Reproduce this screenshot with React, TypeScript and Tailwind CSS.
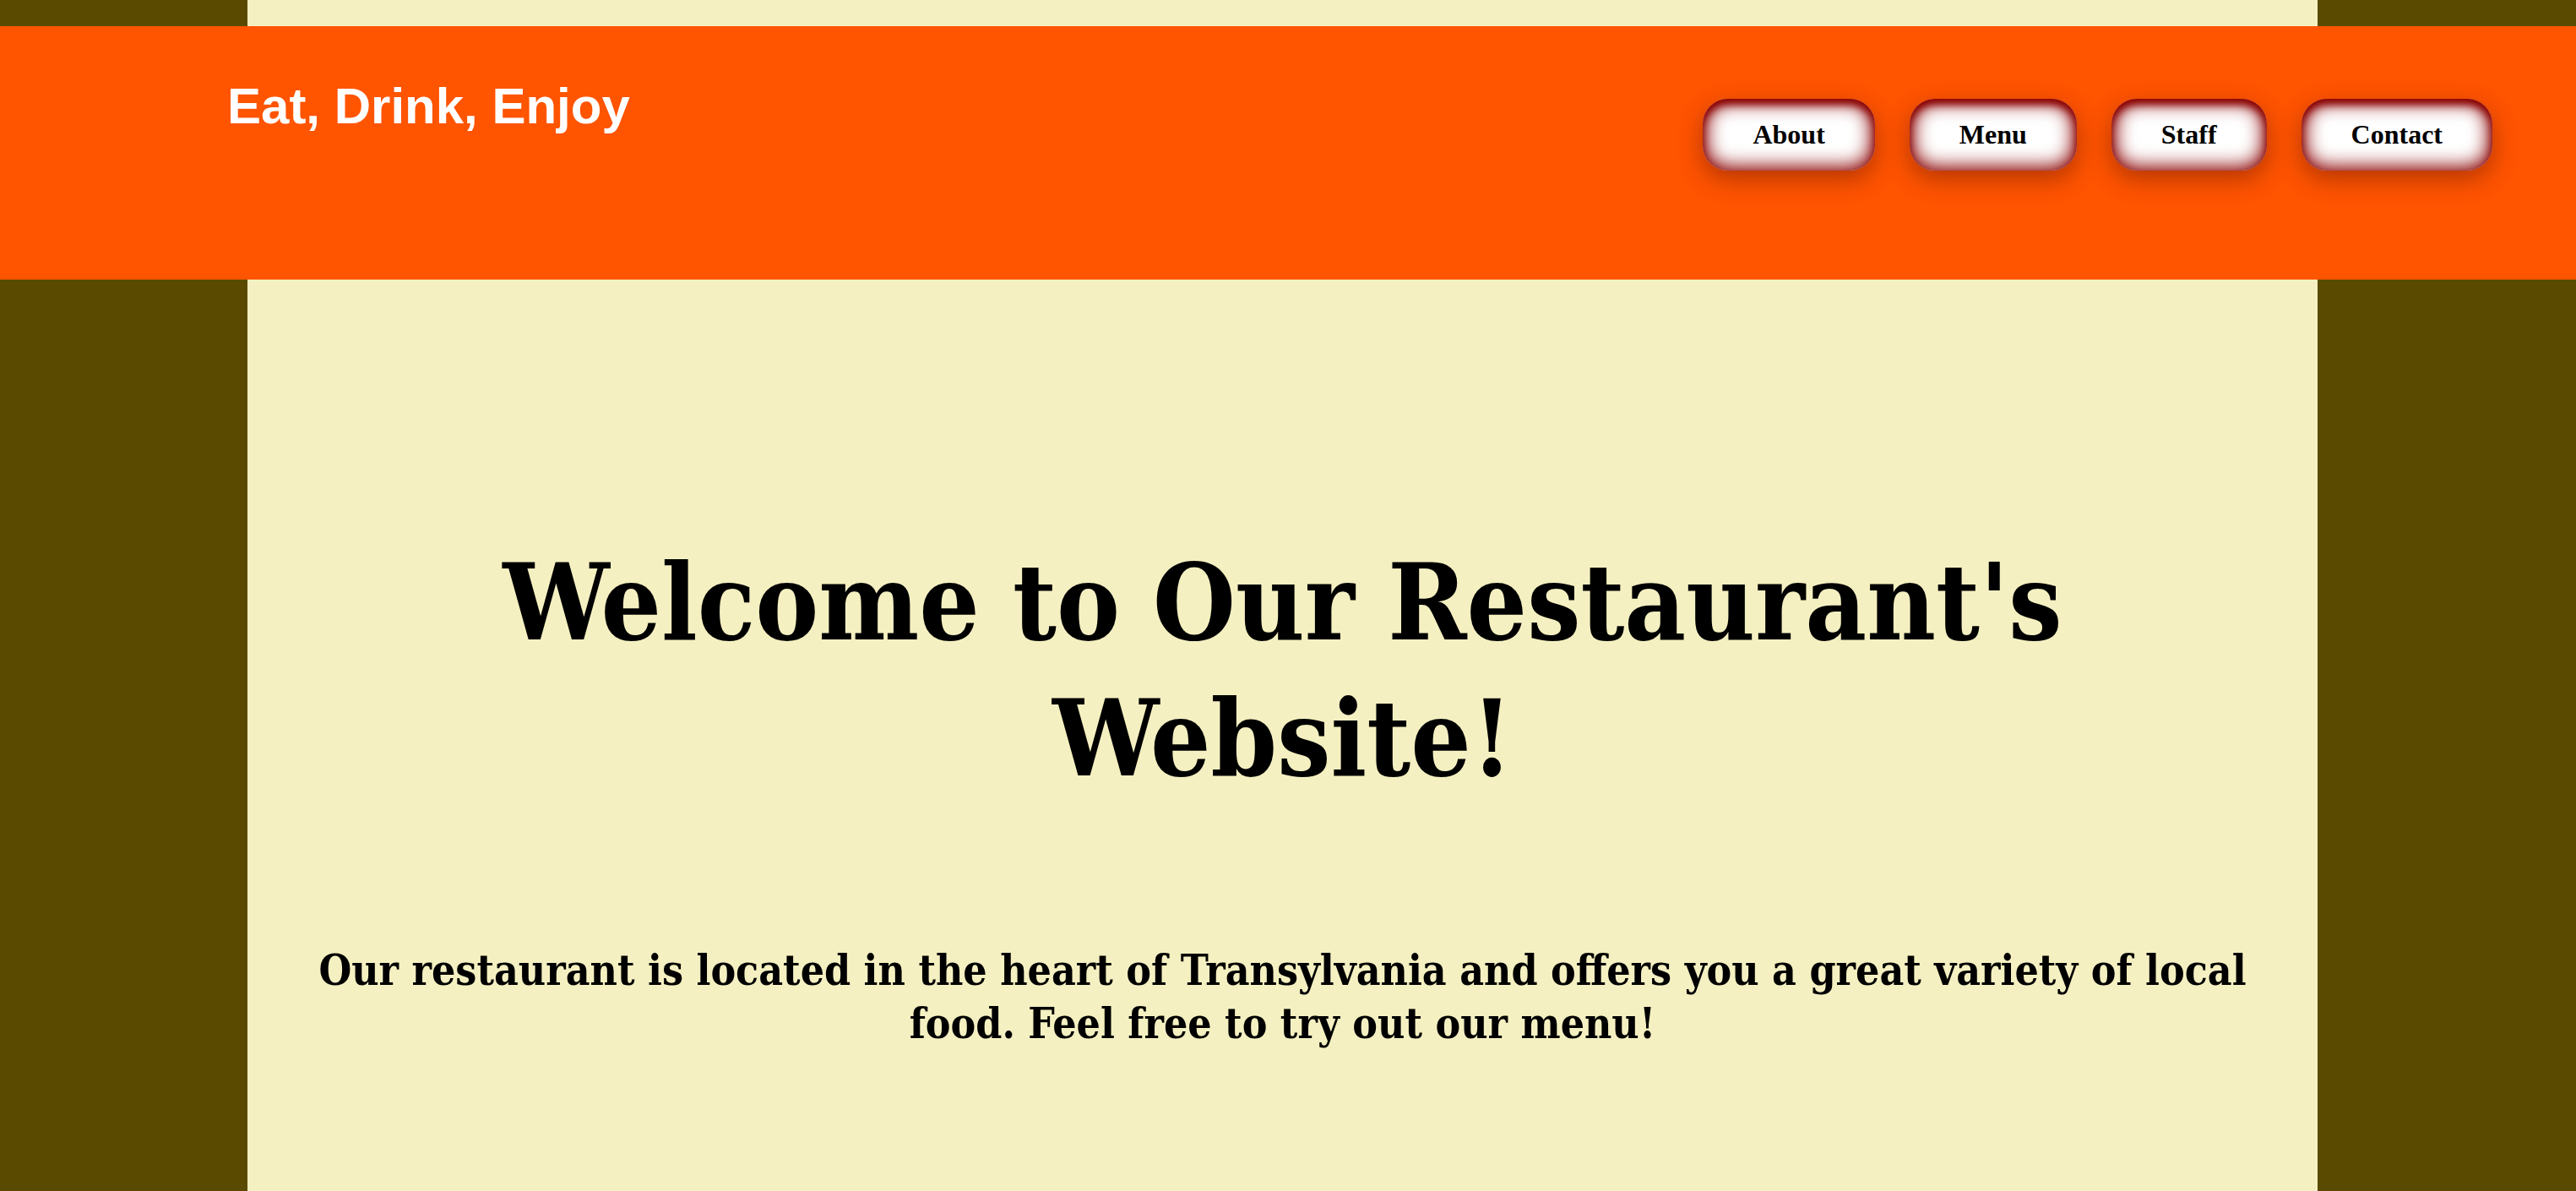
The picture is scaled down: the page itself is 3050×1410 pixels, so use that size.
import React from 'react';

const links = ['About', 'Menu', 'Staff', 'Contact'];

const App: React.FC = () => {
  return (
    <div className="min-h-[1410px] w-[3050px] bg-[#5a4a00] pl-[293px]">
      <div className="min-h-[1410px] w-[2451px] bg-[#f5f0c1] pt-[31px]">
        {/* header spans the full window, wider than the column */}
        <header className="-ml-[293px] flex h-[300px] w-[3050px] items-start justify-between bg-[#ff5400] pl-[269px] pr-[99px]">
          <h1 className="mt-[65px] font-['Liberation_Sans',Arial,sans-serif] text-[60px] font-bold leading-none text-white">
            Eat, Drink, Enjoy
          </h1>
          <nav className="mt-[86px] flex gap-[41px]">
            {links.map((link) => (
              <a
                key={link}
                href="#"
                className="rounded-[30px] bg-white px-[59px] py-[24px] font-['Liberation_Serif','Times_New_Roman',serif] text-[32px] font-bold leading-[37px] text-black shadow-[inset_0_6px_10px_#8b0000,inset_0_0_22px_5px_#8b0000,0_10px_28px_rgba(90,20,0,0.45)]"
              >
                {link}
              </a>
            ))}
          </nav>
        </header>

        <main className="flex flex-col items-center px-[80px] text-center font-['DejaVu_Serif_Condensed','DejaVu_Serif',Georgia,serif] font-stretch-condensed text-black">
          <h2 className="mt-[302px] max-w-[2000px] text-[125px] font-bold leading-[161px]">
            Welcome to Our Restaurant's Website!
          </h2>
          <p className="mt-[163px] max-w-[2320px] text-[49.5px] font-bold leading-[63px]">
            Our restaurant is located in the heart of Transylvania and offers you a great variety of local food. Feel free to try out our menu!
          </p>
        </main>
      </div>
    </div>
  );
};

export default App;
